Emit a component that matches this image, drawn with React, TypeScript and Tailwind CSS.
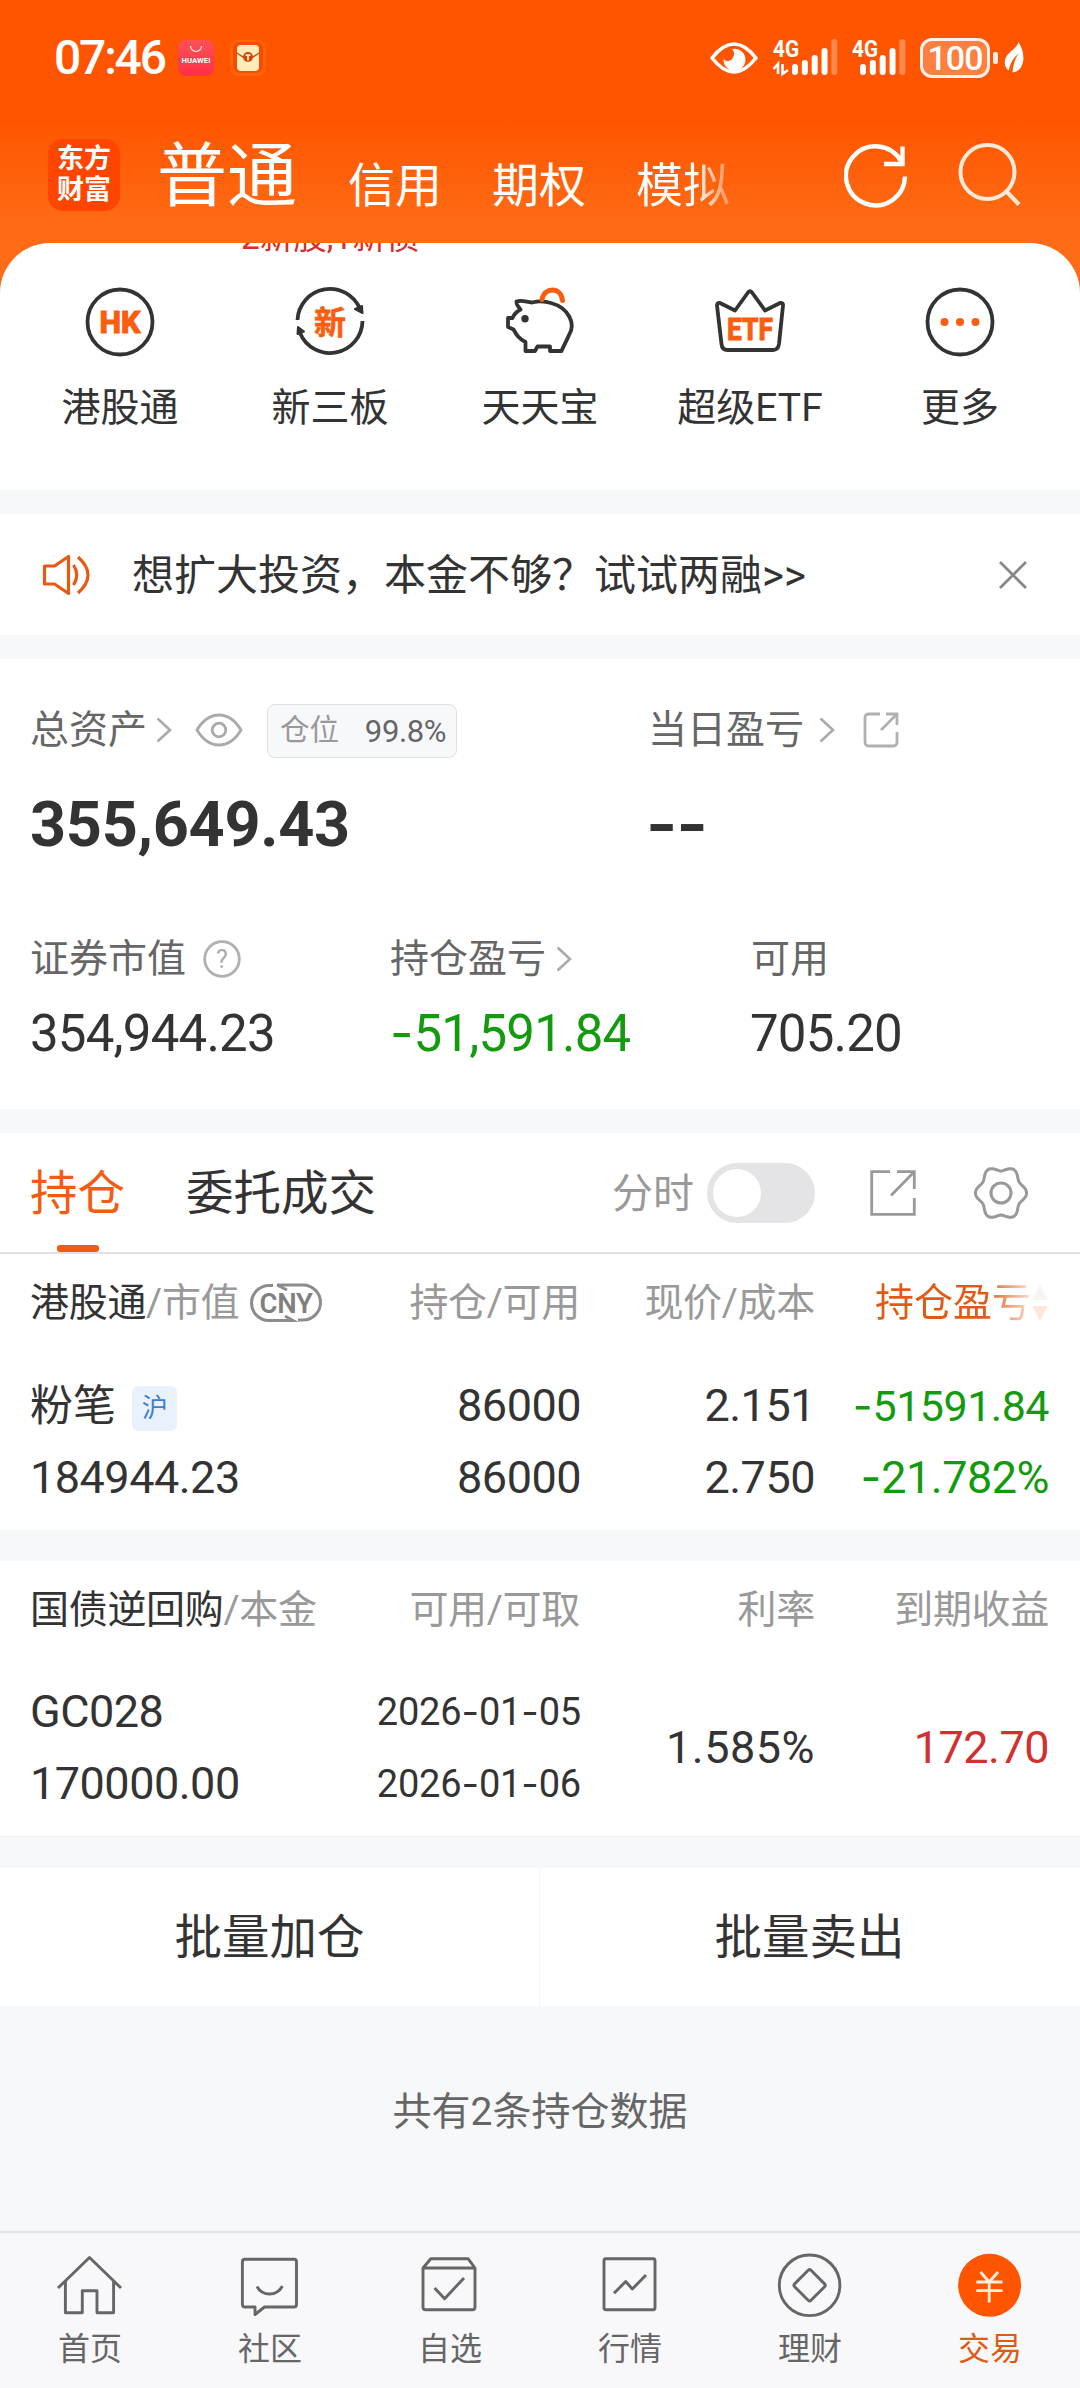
import type { ReactNode } from 'react';

const BARS = [
  { h: 11, dim: false },
  { h: 15, dim: false },
  { h: 20, dim: false },
  { h: 27, dim: false },
  { h: 36, dim: true },
];

// Numbers keep a wide hyphen for the minus sign and the date separators
function Num({ children, className = '' }: { children: string; className?: string }) {
  const parts = children.split('-');
  return (
    <span className={`whitespace-nowrap ${className}`}>
      {parts.map((part, i) => (
        <span key={i}>
          {i > 0 && <span className="inline-block w-[0.46em] text-center font-['Inter'] leading-none tracking-normal">-</span>}
          {part}
        </span>
      ))}
    </span>
  );
}

function Signal({ arrows = false }: { arrows?: boolean }) {
  return (
    <svg width={arrows ? 65 : 54} height="38" viewBox={arrows ? '0 0 65 38' : '0 0 54 38'} className="overflow-visible">
      <text x="0" y="18" fontSize="24" fontWeight="700" fill="#fff" textLength="26" lengthAdjust="spacingAndGlyphs">4G</text>
      {arrows && <path d="M0.5 30 L5 25 V35 M9.500 25 V35 L15 31" fill="none" stroke="#fff" strokeWidth="2.6" />}
      {BARS.map((bar, i) => (
        <rect key={i} x={(arrows ? 19 : 8) + i * 9.85} y={36 - bar.h} width="6" height={bar.h} rx="3" fill="#fff" opacity={bar.dim ? 0.3 : 1} />
      ))}
    </svg>
  );
}

function StatusBar() {
  return (
    <div className="flex h-[116px] items-center pl-[54px] pr-[56px] text-white">
      <Num className="w-[124px] text-[48px] font-medium leading-none tracking-[-2.2px]">07:46</Num>
      <svg width="36" height="36" viewBox="0 0 36 36" className="shrink-0">
        <defs>
          <linearGradient id="store" x1="0" y1="0" x2="0" y2="1">
            <stop offset="0" stopColor="#ff5155" />
            <stop offset="1" stopColor="#fb2f48" />
          </linearGradient>
        </defs>
        <rect width="36" height="36" rx="8" fill="url(#store)" />
        <path d="M12.500 6 a5.500 5.500 0 0 0 11 0" fill="none" stroke="#fff" strokeWidth="1.200" />
        <text x="3.500" y="23" fontSize="7" fontWeight="700" fill="#fff" textLength="29" lengthAdjust="spacingAndGlyphs">HUAWEI</text>
      </svg>
      <svg width="36" height="36" viewBox="0 0 36 36" className="ml-4 shrink-0">
        <rect width="36" height="36" rx="8" fill="#ff6408" />
        <rect x="3" y="2" width="30" height="31" rx="7" fill="#fb4a04" />
        <rect x="7" y="5" width="22" height="26" rx="4" fill="#ffedba" />
        <path d="M7 13 L13 17 H23 L29 13" fill="none" stroke="#d9480f" strokeWidth="1.500" />
        <circle cx="18" cy="17" r="5" fill="#c8490f" />
        <path d="M15.500 15.200 H20.500 M18 15.200 V20.500" stroke="#ffedba" strokeWidth="1.700" />
      </svg>
      <svg width="48" height="34" viewBox="0 0 48 34" className="ml-auto shrink-0">
        <path d="M2 17 Q24 -11 46 17 Q24 45 2 17 Z" fill="none" stroke="#fff" strokeWidth="3.600" strokeLinejoin="round" />
        <path d="M22 8 a11 11 0 1 1 -8.500 10 a5.500 5.500 0 0 0 9.500 -1.500 a7 7 0 0 0 -1 -8.500 Z" fill="#fff" />
      </svg>
      <div className="ml-[15px] shrink-0"><Signal arrows /></div>
      <div className="ml-[14px] shrink-0"><Signal /></div>
      <div className="ml-[14px] flex h-10 w-[70px] shrink-0 items-center justify-center rounded-[12px] border-[3px] border-white/90 bg-white/25 text-[34px] font-medium leading-none tracking-[-1px]">100</div>
      <div className="ml-[3px] h-3 w-[5px] shrink-0 rounded-[2px] bg-white/90" />
      <svg width="20" height="32" viewBox="0 0 20 32" className="ml-[6px] shrink-0">
        <path d="M14.500 0 C19 7 21 16 18 23 C16.500 27.500 13 30 8.500 30.500 C9 23 11 17 14.500 11.500 C9 16 6 22 4.800 28.500 C0 25 -0.500 19 3 13.500 C6.500 8.500 13 6 14.500 0 Z" fill="#fff" />
      </svg>
    </div>
  );
}

function Header() {
  return (
    <div className="flex h-[127px] items-start pl-[48px] pr-[59px] text-white">
      <div className="mt-[23px] flex h-[72px] w-[72px] shrink-0 flex-col items-center justify-center rounded-[15px] bg-[#ff4500] text-[27px] font-bold leading-[31px]">
        <span>东方</span>
        <span>财富</span>
      </div>
      <span className="ml-[37px] mt-[21px] w-[141px] whitespace-nowrap text-[70px] leading-[80px]">普通</span>
      <div className="ml-[50px] mt-[40px] flex w-[386px] gap-[50px] whitespace-nowrap text-[47px] leading-[60px]">
        <span>信用</span>
        <span>期权</span>
        <span className="bg-gradient-to-r from-white from-60% to-white/30 bg-clip-text text-transparent">模拟</span>
      </div>
      <svg width="64" height="66" viewBox="0 0 64 66" className="ml-auto mt-[27px] shrink-0">
        <path d="M61 33.500 A29.500 29.500 0 1 1 57 18 M58.500 3.500 V21 H40" fill="none" stroke="#fff" strokeWidth="4.400" />
      </svg>
      <svg width="64" height="66" viewBox="0 0 64 66" className="ml-[49px] mt-[27px] shrink-0">
        <g fill="none" stroke="#ffe9d8" strokeWidth="4">
          <circle cx="30.500" cy="29" r="27" />
          <path d="M49 48 L62 61.500" />
        </g>
      </svg>
    </div>
  );
}

function Shortcut({ label, children }: { label: string; children: ReactNode }) {
  return (
    <div className="flex w-[210px] flex-col items-center">
      <svg width="72" height="72" viewBox="0 0 72 72" fill="none" stroke="#333" strokeWidth="3.800" strokeLinejoin="round">{children}</svg>
      <span className="mt-[26px] whitespace-nowrap text-[39px] leading-[48px]">{label}</span>
    </div>
  );
}

function Shortcuts() {
  return (
    <div className="relative flex h-[247px] overflow-hidden rounded-t-[50px] bg-white px-[15px] pt-[43px]">
      <span className="absolute left-[241px] top-[-25px] whitespace-nowrap text-[33.5px] leading-[40px] text-[#d32f2f]">2新股,1新债</span>
      <Shortcut label="港股通">
        <circle cx="36" cy="36" r="32.500" />
        <text x="36" y="47" textAnchor="middle" fontSize="31" fontWeight="800" fill="#f95e10" stroke="#f95e10" strokeWidth="1" textLength="41" lengthAdjust="spacingAndGlyphs">HK</text>
      </Shortcut>
      <Shortcut label="新三板">
        <path d="M3.500 34 A32.500 32.500 0 0 1 66 23 M68.500 35 A32.500 32.500 0 0 1 6 47" />
        <path d="M61 23 L68 20 L68.500 27 Z M3.500 48 L4 41 L10 45.500 Z" fill="#333" strokeWidth="2" />
        <text x="36" y="48" textAnchor="middle" fontSize="32" fontWeight="700" fill="#f95e10" stroke="#f95e10" strokeWidth="0.6">新</text>
      </Shortcut>
      <Shortcut label="天天宝">
        <path d="M12.500 15.500 C17 13.500 21 15.500 28 16.500 C34 15 41 15 47 17 C65 22 72 38 65 49 C63 54 60 59 57.500 65 H46 V60.500 H33.500 L31 65 H21.500 V56 C14 52 12 48 9.500 43.500 L4 41 V32 H8.500 C10 28 12 26 16.500 23.500 C14 20 12 19 12.500 15.500 Z" />
        <circle cx="21" cy="32.700" r="2.200" fill="#333" strokeWidth="3" />
        <path d="M38 13.500 C40 1 57 0 58.500 14.500" stroke="#f95e10" strokeWidth="5" strokeLinecap="round" />
      </Shortcut>
      <Shortcut label="超级ETF">
        <path d="M3 19.500 Q3 16.500 6 17 L21 24.500 L34 6.500 Q36 4 38 6.500 L51 24.500 L66 17 Q69.500 16.500 69 19.500 L65 58 Q64 64 59 64 H13.500 Q8 64 7.500 58 Z" />
        <text x="36" y="53.500" textAnchor="middle" fontSize="32" fontWeight="800" fill="#f95e10" stroke="#f95e10" strokeWidth="0.8" textLength="46" lengthAdjust="spacingAndGlyphs">ETF</text>
      </Shortcut>
      <Shortcut label="更多">
        <circle cx="36" cy="36" r="32.500" />
        <g fill="#f95e10" stroke="none">
          <circle cx="20.500" cy="36" r="4" />
          <circle cx="36" cy="36" r="4" />
          <circle cx="51.500" cy="36" r="4" />
        </g>
      </Shortcut>
    </div>
  );
}

function Notice() {
  return (
    <div className="mt-6 flex h-[121px] items-center bg-white pl-[42px] pr-[53px]">
      <svg width="48" height="42" viewBox="0 0 48 42" fill="none" stroke="#e65a14" strokeWidth="3.200" strokeLinejoin="round">
        <path d="M2.500 12 H12.500 L26.500 2.500 V39.500 L12.500 30 H2.500 Z" />
        <path d="M31.500 11 Q38 21 31.500 31 M36 3 Q56 21 36 39" />
      </svg>
      <span className="ml-[42px] whitespace-nowrap pt-[2px] text-[42px] leading-[60px]">想扩大投资，本金不够？试试两融&gt;&gt;</span>
      <svg width="28" height="28" viewBox="0 0 28 28" className="ml-auto">
        <path d="M1 1 L27 27 M27 1 L1 27" stroke="#888" strokeWidth="2.800" />
      </svg>
    </div>
  );
}

function Chevron({ className = '' }: { className?: string }) {
  return (
    <svg width="16" height="26" viewBox="0 0 16 26" className={`shrink-0 ${className}`}>
      <path d="M1.500 1.500 L14 13 L1.500 24.500" fill="none" stroke="#aaa" strokeWidth="2.600" />
    </svg>
  );
}

function Assets() {
  return (
    <div className="mt-6 h-[450px] bg-white pl-[30px] text-[39px] text-[#666]">
      <div className="flex h-[142px] items-center">
        <div className="flex w-[618px] items-center">
          <span className="leading-[48px]">总资产</span>
          <Chevron className="ml-[9px]" />
          <svg width="48" height="34" viewBox="0 0 48 34" className="ml-[23px]" fill="none" stroke="#aaa" strokeWidth="2.800">
            <path d="M2 17 Q11 2 24 2 Q37 2 46 17 Q37 32 24 32 Q11 32 2 17 Z" />
            <circle cx="24" cy="17" r="6.800" />
          </svg>
          <div className="ml-[24px] mt-[2px] flex h-[54px] w-[190px] items-center justify-between whitespace-nowrap rounded-[8px] border border-[#dfe0e3] bg-[#f7f8fa] pl-[12px] pr-[10px] text-[29.5px] leading-none text-[#999]">
            <span>仓位</span>
            <Num className="text-[31px] tracking-[-0.4px] text-[#666]">99.8%</Num>
          </div>
        </div>
        <span className="leading-[48px]">当日盈亏</span>
        <Chevron className="ml-[15px]" />
        <svg width="36" height="36" viewBox="0 0 36 36" className="ml-[28px]" fill="none" stroke="#b0b0b0" strokeWidth="2.800">
          <path d="M17 2 H6 Q2 2 2 6 V30 Q2 34 6 34 H30 Q34 34 34 30 V20 M23 2 H34 V13 M33 3 L18 18" />
        </svg>
      </div>
      <div className="flex h-[46px] items-center font-bold text-[#333]">
        <Num className="w-[616px] text-[63px] leading-none tracking-[-0.3px]">355,649.43</Num>
        <span className="origin-left scale-x-[1.28] pt-[2px] text-[63px] leading-none tracking-[-1px]">--</span>
      </div>
      <div className="mt-[86px] flex h-[52px] items-center leading-[48px]">
        <div className="flex w-[360px] items-center">
          证券市值
          <svg width="38" height="38" viewBox="0 0 38 38" className="ml-[17px]">
            <circle cx="19" cy="19" r="17.300" fill="none" stroke="#b0b0b0" strokeWidth="2.800" />
            <text x="19" y="28" textAnchor="middle" fontSize="25" fill="#aaa">?</text>
          </svg>
        </div>
        <div className="flex w-[361px] items-center">
          持仓盈亏
          <Chevron className="ml-[10px]" />
        </div>
        可用
      </div>
      <div className="mt-[22px] flex h-[52px] items-center text-[51px] leading-none tracking-[-0.8px] text-[#333]">
        <Num className="w-[360px]">354,944.23</Num>
        <Num className="w-[360px] text-[#149a0f]">-51,591.84</Num>
        <Num>705.20</Num>
      </div>
    </div>
  );
}

// Six-lobed gear outline around (27, 27)
const gearPoints = Array.from({ length: 72 }, (_, i) => {
  const a = (i * Math.PI) / 36;
  const r = 23.2 + 2.4 * Math.cos(6 * a);
  return `${(27 + r * Math.cos(a)).toFixed(2)},${(27 + 1.06 * r * Math.sin(a)).toFixed(2)}`;
}).join(' ');

function Tabs() {
  return (
    <div className="mt-6 flex h-[121px] items-center border-b-2 border-[#e2e2e4] bg-white pl-[30px] pr-[52px] text-[47.5px] leading-[60px]">
      <div className="flex h-full w-[95px] flex-col items-center">
        <span className="mt-[31px] whitespace-nowrap text-[#f25c12]">持仓</span>
        <div className="mt-auto h-[7px] w-[42px] rounded-[3px] bg-[#f25c12]" />
      </div>
      <span className="ml-[61px] whitespace-nowrap pt-[3px]">委托成交</span>
      <span className="ml-auto whitespace-nowrap pt-[2px] text-[41px] text-[#999]">分时</span>
      <div className="ml-[13px] flex h-[60px] w-[108px] items-center rounded-full bg-[#e4e4e6] pl-[6px]">
        <div className="h-12 w-12 rounded-full bg-white" />
      </div>
      <svg width="46" height="46" viewBox="0 0 46 46" className="ml-[55px]" fill="none" stroke="#999" strokeWidth="2.800">
        <path d="M20 1.700 H1.700 V44.300 H44.300 V28 M27 1.700 H44.300 V19 M43.500 2.500 L21 25.500" />
      </svg>
      <svg width="54" height="54" viewBox="0 0 54 54" className="ml-[58px]" fill="none" stroke="#999" strokeWidth="3">
        <polygon points={gearPoints} strokeLinejoin="round" />
        <circle cx="27" cy="27" r="10" />
      </svg>
    </div>
  );
}

function Holdings() {
  return (
    <div className="h-[276px] bg-white pl-[30px] pr-[31px] pt-[25px] text-[#333]">
      <div className="flex h-[48px] items-center whitespace-nowrap text-[39px] leading-[48px] tracking-[-0.3px] text-[#999]">
        <span className="text-[#333]">港股通</span>
        <span>/市值</span>
        <svg width="74" height="42" viewBox="0 0 74 42" className="ml-[10px]">
          <path d="M24 3.500 H20 A17.500 17.500 0 0 0 20 38.500 H44 L36 34 M28 3 H54 A17.500 17.500 0 0 1 54 38 H49 M28 3 L38 8" fill="none" stroke="#8c8c8c" strokeWidth="3" />
          <text x="37" y="31" textAnchor="middle" fontSize="28" fontWeight="600" fill="#808080" textLength="53" lengthAdjust="spacingAndGlyphs">CNY</text>
        </svg>
        <span className="ml-auto w-[235px] text-right">持仓/可用</span>
        <span className="w-[235px] text-right">现价/成本</span>
        <div className="flex w-[234px] items-center justify-end tracking-normal">
          <span className="bg-gradient-to-r from-[#e05a14] from-70% to-[#e05a14]/20 bg-clip-text text-transparent">持仓盈亏</span>
          <svg width="18" height="36" viewBox="0 0 18 36">
            <path d="M9 0 L17 15 H1 Z" fill="#f5f5f5" />
            <path d="M9 36 L17 21 H1 Z" fill="#fde6dc" />
          </svg>
        </div>
      </div>
      <div className="mt-[43px] flex items-start text-[45px] leading-[72px] tracking-[-0.5px]">
        <div className="w-[317px]">
          <div className="flex h-[72px] items-center">
            <span className="text-[43px] tracking-normal">粉笔</span>
            <span className="ml-[16px] mt-1 flex h-[45px] w-[45px] items-center justify-center rounded-[6px] bg-[#e9f2fc] text-[26px] leading-none text-[#3c7dd6]">沪</span>
          </div>
          <Num>184944.23</Num>
        </div>
        <div className="flex w-[234px] flex-col text-right">
          <Num>86000</Num>
          <Num>86000</Num>
        </div>
        <div className="flex w-[234px] flex-col text-right">
          <Num>2.151</Num>
          <Num>2.750</Num>
        </div>
        <div className="flex w-[234px] flex-col text-right text-[#149a0f]">
          <Num className="text-[43px]">-51591.84</Num>
          <Num>-21.782%</Num>
        </div>
      </div>
    </div>
  );
}

function Bonds() {
  return (
    <div className="mt-[31px] h-[276px] border-b border-[#eee] bg-white pl-[30px] pr-[31px] pt-[25px] text-[#333]">
      <div className="flex h-[48px] items-center whitespace-nowrap text-[39px] leading-[48px] tracking-[-0.3px] text-[#999]">
        <span className="text-[#333]">国债逆回购</span>
        <span>/本金</span>
        <span className="ml-auto w-[235px] text-right">可用/可取</span>
        <span className="w-[235px] text-right">利率</span>
        <span className="w-[234px] text-right">到期收益</span>
      </div>
      <div className="mt-[42px] flex items-center text-[45px] leading-[72px] tracking-[-0.5px]">
        <div className="flex w-[317px] flex-col">
          <Num>GC028</Num>
          <Num>170000.00</Num>
        </div>
        <div className="flex w-[234px] flex-col text-right text-[38px] tracking-[-0.2px]">
          <Num>2026-01-05</Num>
          <Num>2026-01-06</Num>
        </div>
        <Num className="w-[234px] text-right tracking-[0.5px]">1.585%</Num>
        <Num className="w-[234px] text-right text-[#d32f2f]">172.70</Num>
      </div>
    </div>
  );
}

function NavItem({ label, active = false, children }: { label: string; active?: boolean; children: ReactNode }) {
  return (
    <div className={`flex w-[180px] flex-col items-center ${active ? 'text-[#e05a14]' : 'text-[#666]'}`}>
      <svg width="66" height="66" viewBox="0 0 66 66" fill="none" stroke="#666" strokeWidth="2.900" strokeLinejoin="round">{children}</svg>
      <span className="mt-[10px] text-[32px] leading-[40px]">{label}</span>
    </div>
  );
}

function BottomNav() {
  return (
    <div className="flex h-[157px] border-t-2 border-[#e4e5e8] bg-[#f8f8fa] pt-[20px]">
      <NavItem label="首页">
        <path d="M1 35 L32.500 4.500 L64 35 M8.400 27.500 V59.700 H25.300 V37.700 H40 V59.700 H56.600 V27.500" />
      </NavItem>
      <NavItem label="社区">
        <path d="M8 6.300 H57 Q59.500 6.300 59.500 9 V51.500 Q59.500 54 57 54 H27.500 L18 61.500 V54 H8 Q5.400 54 5.400 51.500 V9 Q5.400 6.300 8 6.300 Z M20 33.500 Q24 41 32.600 41 Q41 41 45.400 33" />
      </NavItem>
      <NavItem label="自选">
        <path d="M6 15 L13.800 5.700 H51 L58 15 V54 Q58 56.700 55.500 56.700 H8.500 Q6 56.700 6 54 Z H58 M17.600 35 L27.600 45.700 L47 25" />
      </NavItem>
      <NavItem label="行情">
        <rect x="7" y="5.700" width="51" height="51" rx="2" />
        <path d="M17 40.300 L28.700 28.500 L35.300 36 L49 22" />
      </NavItem>
      <NavItem label="理财">
        <circle cx="32.600" cy="32.300" r="30.300" />
        <rect x="21" y="20.700" width="23.200" height="23.200" rx="2" transform="rotate(45 32.600 32.300)" />
      </NavItem>
      <NavItem label="交易" active>
        <circle cx="32.600" cy="32.300" r="31.500" fill="#ff5500" stroke="none" />
        <path d="M23.500 19 L32.200 29 L41 19 M19.300 29 H45.500 M19.300 37.700 H45.500 M32.200 29 V49.500" stroke="#ffeedd" strokeWidth="2.800" />
      </NavItem>
    </div>
  );
}

export default function App() {
  return (
    <div className="flex h-[2388px] w-[1080px] flex-col overflow-hidden bg-[#f7f8fa] font-['Roboto','Noto_Sans_CJK_SC',sans-serif] text-[#333]">
      <div className="bg-[linear-gradient(180deg,#ff5500_0px,#ff5500_120px,#ff6a14_220px,#ff6d19_293px)]">
        <StatusBar />
        <Header />
        <Shortcuts />
      </div>
      <Notice />
      <Assets />
      <Tabs />
      <Holdings />
      <Bonds />
      <div className="mt-[31px] flex h-[138px] items-center bg-white text-[47.5px] leading-[60px]">
        <span className="w-[539px] pt-[2px] text-center">批量加仓</span>
        <div className="h-full w-px bg-[#f5f5f6]" />
        <span className="w-[539px] pt-[2px] text-center">批量卖出</span>
      </div>
      <div className="flex flex-1 justify-center pt-[82px] text-[39px] leading-[48px] text-[#666]">共有2条持仓数据</div>
      <BottomNav />
    </div>
  );
}
